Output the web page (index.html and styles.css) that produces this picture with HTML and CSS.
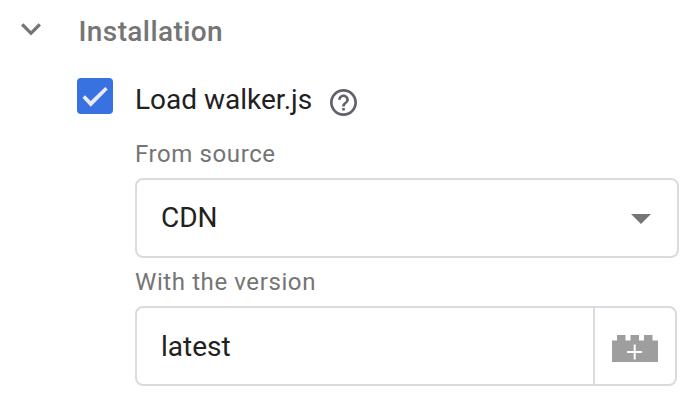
FILE: index.html
```html
<!DOCTYPE html>
<html lang="en">
<head>
<meta charset="utf-8">
<title>Installation</title>
<link rel="stylesheet" href="styles.css">
</head>
<body>
<main class="panel">
  <header class="section-header">
    <svg class="chevron" viewBox="0 0 22 14" aria-hidden="true"><path d="M3.400 0.300L11 7.900L18.600 0.300L21 2.600L11 12.500L1 2.600z"/></svg>
    <h2>Installation</h2>
  </header>
  <div class="check-row">
    <span class="checkbox" role="checkbox" aria-checked="true" aria-label="Load walker.js"><svg viewBox="0 0 36 36"><path d="M5.500 19.700L8 17.200L13.700 22.900L28.200 9L30.700 11.500L13.700 28.700z"/></svg></span>
    <span class="check-label">Load walker.js</span>
    <svg class="help" viewBox="2 2 20 20" aria-hidden="true"><path d="M11 18h2v-2h-2v2zm1-16C6.480 2 2 6.480 2 12s4.480 10 10 10 10-4.480 10-10S17.520 2 12 2zm0 18c-4.410 0-8-3.590-8-8s3.590-8 8-8 8 3.590 8 8-3.590 8-8 8zm0-14c-2.210 0-4 1.790-4 4h2c0-1.100.9-2 2-2s2 .9 2 2c0 2-3 1.750-3 5h2c0-2.250 3-2.500 3-5 0-2.210-1.790-4-4-4z"/></svg>
  </div>
  <div class="fields">
    <div class="label">From source</div>
    <div class="select"><span>CDN</span><svg class="arrow" viewBox="0 0 20 10"><path d="M0 0h20L10 10z"/></svg></div>
    <div class="label">With the version</div>
    <div class="input-group">
      <div class="input">latest</div>
      <div class="variable"><svg viewBox="0 0 46 27"><path class="brick" d="M0 5.500h5V0h8.500v5.500h5V0H27v5.500h5V0h8.500v5.500H46V27H0z"/><path class="plus" d="M22.700 9.500v15M15 17h15"/></svg></div>
    </div>
  </div>
</main>
</body>
</html>
```
FILE: styles.css
```css
* { box-sizing: border-box; }
body { margin: 0; background: #fff; color: #212121; font-family: Roboto, sans-serif; }
.panel { width: 696px; height: 400px; padding: 14px 17px 0 20px; overflow: hidden; }
.section-header { display: flex; align-items: center; height: 36px; }
.chevron { width: 22px; height: 14px; margin: -4px 36.500px 0 0; fill: #757575; }
h2 { margin: 0; font-size: 28px; font-weight: 500; line-height: 36px; letter-spacing: .4px; color: #757575; }
.check-row { display: flex; align-items: center; height: 36px; margin: 28px 0 0 57px; }
.checkbox { width: 36px; height: 36px; border-radius: 4px; background: #3871e0; }
.checkbox svg { display: block; fill: #e8eaed; }
.check-label { margin: 8px 0 0 22px; font-size: 28px; line-height: 36px; }
.help { width: 27px; height: 27px; margin: 12px 0 0 17.700px; fill: #5f6368; }
.fields { margin-left: 115px; }
.label { height: 32px; margin-top: 24px; font-size: 24px; line-height: 32px; letter-spacing: .6px; color: #757575; }
.select { display: flex; align-items: center; justify-content: space-between; width: 544px; height: 80px; margin-top: 8px; padding: 0 26px 0 24px; border: 2px solid #dadae0; border-radius: 8px; font-size: 28px; line-height: 36px; }
.arrow { width: 20px; height: 10px; margin-top: 2px; fill: #757575; }
.select + .label { margin-top: 8px; }
.input-group { display: flex; width: 542px; height: 80px; margin-top: 8px; border: 2px solid #dadae0; border-radius: 8px; }
.input { width: 456px; padding-left: 24px; font-size: 28px; line-height: 78px; }
.variable { display: flex; flex: 1; align-items: center; justify-content: center; border-left: 2px solid #dadae0; }
.variable svg { width: 46px; height: 27px; margin-top: 5px; }
.brick { fill: #9e9e9e; }
.plus { fill: none; stroke: #fff; stroke-width: 2; }
```
